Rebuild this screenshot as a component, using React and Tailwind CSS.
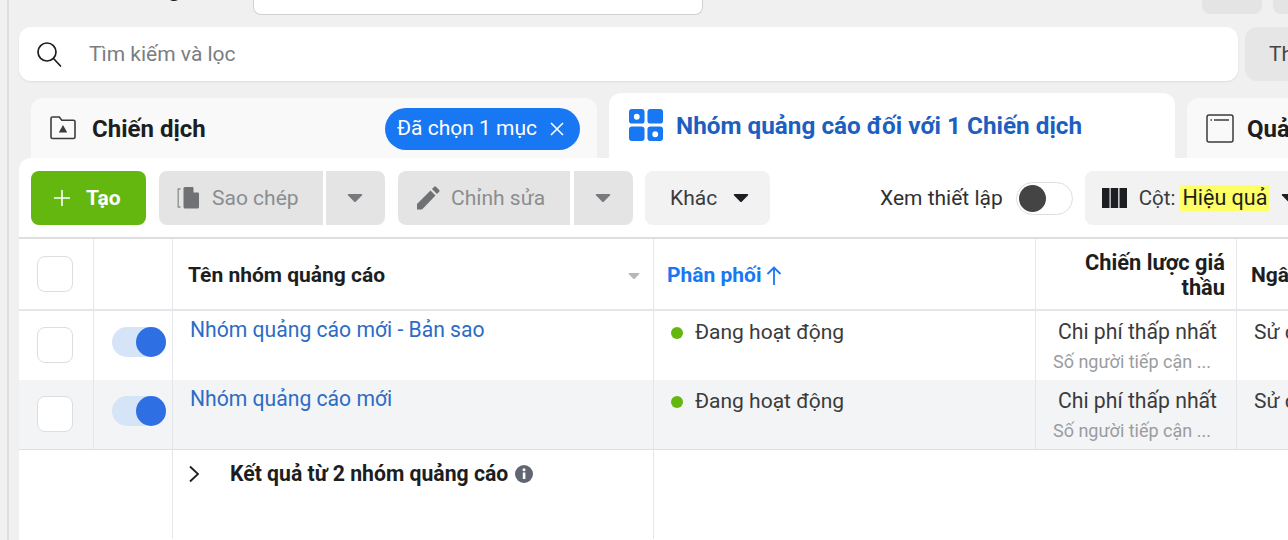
import React from 'react';

const font = { fontFamily: 'Roboto, sans-serif' };

function Caret({ className }) {
  return (
    <svg width="16" height="10" viewBox="0 0 16 10" className={className}>
      <path d="M1.5 1h13a.8.8 0 0 1 .6 1.3L9 8.6a1.4 1.4 0 0 1-2 0L.9 2.3A.8.8 0 0 1 1.5 1z" fill="currentColor" />
    </svg>
  );
}

function Toggle() {
  return (
    <div className="relative w-[54px] h-[30px] rounded-full bg-[#d6e4f7]">
      <div className="absolute right-0 top-0 w-[30px] h-[30px] rounded-full bg-[#2f6fe4]" />
    </div>
  );
}

function Checkbox() {
  return <div className="w-[36px] h-[36px] rounded-lg border border-[#dcdee1] bg-white" />;
}

function Row({ name, shaded }) {
  const bg = shaded ? 'bg-[#f3f4f6]' : 'bg-white';
  return (
    <>
      <div className={`${bg} h-[69px] border-r border-[#e4e6e9] flex justify-center pr-[2px] pt-[16px]`}>
        <Checkbox />
      </div>
      <div className={`${bg} h-[69px] border-r border-[#e4e6e9] flex justify-end pr-[6px] pt-[16px]`}>
        <Toggle />
      </div>
      <div className={`${bg} h-[69px] border-r border-[#e4e6e9] pl-[17px] pt-[5px] text-[21.15px] leading-[28px] text-[#2d6cc4] whitespace-nowrap`}>{name}</div>
      <div className={`${bg} h-[69px] border-r border-[#e4e6e9] pl-[17px] pt-[7px] flex items-start gap-[12px]`}>
        <span className="w-[12px] h-[12px] mt-[9px] rounded-full bg-[#63b70f]" />
        <span className="text-[21px] leading-[28px] text-[#3a3b3d]">Đang hoạt động</span>
      </div>
      <div className={`${bg} h-[69px] border-r border-[#e4e6e9] pt-[7px] pl-[17px]`}>
        <div className="text-[21.2px] leading-[28px] text-[#3a3b3d] text-center pr-[14px] whitespace-nowrap">Chi phí thấp nhất</div>
        <div className="text-[18px] leading-[22px] mt-[5px] text-[#9a9c9f] whitespace-nowrap">Số người tiếp cận ...</div>
      </div>
      <div className={`${bg} h-[69px] pl-[17px] pt-[7px] text-[21px] leading-[28px] text-[#3a3b3d] whitespace-nowrap`}>Sử dụng</div>
    </>
  );
}

export default function App() {
  return (
    <div style={font} className="w-[1288px] h-[540px] overflow-hidden bg-[#f0f0f0] flex">
      <div className="w-[7px] shrink-0 border-r-2 border-[#dfdfdf] box-content" />

      <div className="w-[1400px] shrink-0 pl-[10px]">
        {/* top bar, cut off by the window */}
        <div className="h-[15px] flex overflow-hidden">
          <div className="w-[234px] text-[26px] font-bold text-[#1c1e21] pl-[87px] leading-[24px] -mt-[25px] whitespace-nowrap">Quảng cáo</div>
          <div className="w-[450px] h-[15px] bg-white rounded-b-lg border border-t-0 border-[#cfd1d4]" />
          <div className="w-[60px] h-[14px] ml-[499px] bg-[#e4e4e4] rounded-b-lg" />
          <div className="w-[60px] h-[14px] ml-[11px] bg-[#e4e4e4] rounded-b-lg" />
        </div>

        {/* search */}
        <div className="flex gap-[7px] mt-[12px]">
          <div className="w-[1219px] shrink-0 h-[54px] bg-white rounded-xl flex items-center pl-[17px] shadow-[0_1px_2px_rgba(0,0,0,0.08)]">
            <svg width="26" height="26" viewBox="0 0 26 26" fill="none" stroke="#1c1e21" strokeWidth="1.7">
              <circle cx="11" cy="11" r="9" />
              <path d="M17.5 17.5 24.5 25" strokeLinecap="round" />
            </svg>
            <span className="ml-[27px] mt-[2px] text-[21px] text-[#7b7d80]">Tìm kiếm và lọc</span>
          </div>
          <div className="w-[100px] shrink-0 h-[54px] bg-[#e6e6e6] rounded-xl pl-[24px] text-[21px] leading-[54px] text-[#444]">Thêm</div>
        </div>

        {/* tabs */}
        <div className="flex items-end h-[77px] pl-[12px] gap-[12px]">
          <div className="w-[566px] shrink-0 h-[60px] bg-[#f9f9f9] rounded-t-xl flex pl-[18px] pr-[17px] pt-[10px] items-start">
            <svg width="28" height="28" viewBox="0 0 28 28" fill="none" stroke="#3a3b3d" strokeWidth="1.6" className="mt-[5px]">
              <path d="M2 24V5.5A1.5 1.5 0 0 1 3.500 4h6.800l2.500 3.200H24.500A1.500 1.500 0 0 1 26 8.700V24a1.500 1.500 0 0 1-1.500 1.500h-21A1.500 1.500 0 0 1 2 24z" />
              <path d="M14 12l4.200 7.500H9.800z" fill="#3a3b3d" stroke="none" />
            </svg>
            <span className="ml-[15px] text-[24px] leading-[42px] font-bold text-[#1c1e21]">Chiến dịch</span>
            <div className="ml-auto h-[42px] w-[195px] rounded-full bg-[#1877f2] text-white flex items-center pl-[12px] gap-[12px] text-[21px] whitespace-nowrap">
              Đã chọn 1 mục
              <svg width="16" height="16" viewBox="0 0 16 16" stroke="#fff" strokeWidth="1.600"><path d="M2 2l12 12M14 2 2 14" /></svg>
            </div>
          </div>

          <div className="w-[566px] shrink-0 h-[65px] bg-white rounded-t-xl flex pl-[20px] pt-[15px] items-start">
            <svg width="34" height="34" viewBox="0 0 35 35" fill="#1877f2" fillRule="evenodd">
              <path d="M3 1h10a3 3 0 0 1 3 3v9a3 3 0 0 1-3 3H3a3 3 0 0 1-3-3V4a3 3 0 0 1 3-3zm5 5a3 3 0 1 0 0 6 3 3 0 0 0 0-6z" />
              <rect x="19" y="1" width="16" height="15" rx="3" />
              <rect x="0" y="19" width="16" height="15" rx="3" />
              <path d="M22 19h10a3 3 0 0 1 3 3v9a3 3 0 0 1-3 3H22a3 3 0 0 1-3-3v-9a3 3 0 0 1 3-3zm5 5a3 3 0 1 0 0 6 3 3 0 0 0 0-6z" />
            </svg>
            <span className="ml-[13px] mt-[1px] text-[24.3px] leading-[34px] font-bold text-[#1d5fc0] whitespace-nowrap">Nhóm quảng cáo đối với 1 Chiến dịch</span>
          </div>

          <div className="w-[300px] shrink-0 h-[60px] bg-[#f9f9f9] rounded-t-xl flex pl-[19px] pt-[10px] items-start">
            <svg width="28" height="30" viewBox="0 0 28 30" fill="none" stroke="#3a3b3d" strokeWidth="1.500" className="mt-[6px]">
              <rect x="1" y="1" width="26" height="27" rx="2" />
              <path d="M4.500 6h1.500M8 6h15" />
            </svg>
            <span className="ml-[13px] text-[24px] leading-[42px] font-bold text-[#1c1e21]">Quảng cáo</span>
          </div>
        </div>

        {/* panel */}
        <div className="bg-white rounded-tl-xl h-[382px]">
          <div className="h-[81px] border-b-2 border-[#dedede] flex items-start pt-[13px] pl-[12px]">
            <div className="w-[115px] shrink-0 h-[54px] rounded-lg bg-[#63b70f] text-white flex items-center pl-[22px] gap-[15px]">
              <svg width="18" height="18" viewBox="0 0 18 18" stroke="#fff" strokeWidth="1.600"><path d="M9 1v16M1 9h16" /></svg>
              <span className="mt-[2px] text-[21px] font-bold">Tạo</span>
            </div>

            <div className="ml-[13px] w-[164px] shrink-0 h-[54px] rounded-l-lg bg-[#e4e4e4] flex items-center pl-[17px] text-[#8b8d90]">
              <svg width="26" height="26" viewBox="0 0 26 26">
                <path d="M4.500 4H2.200v18h2.300" fill="none" stroke="#8b8d90" strokeWidth="1.300" />
                <path d="M9 2h8l6 6v14a1.500 1.500 0 0 1-1.500 1.500H9A1.500 1.500 0 0 1 7.500 22V3.500A1.500 1.500 0 0 1 9 2z" fill="#6f7174" />
                <path d="M17.500 1.500v6h6z" fill="#e4e4e4" />
              </svg>
              <span className="ml-[10px] mt-[2px] text-[21px] whitespace-nowrap">Sao chép</span>
            </div>
            <div className="ml-[3px] w-[59px] shrink-0 h-[54px] rounded-r-lg bg-[#e4e4e4] flex items-center justify-center pr-[2px] text-[#77797c]">
              <Caret />
            </div>

            <div className="ml-[13px] w-[172px] shrink-0 h-[54px] rounded-l-lg bg-[#e4e4e4] flex items-center pl-[17px] text-[#8b8d90]">
              <svg width="26" height="26" viewBox="0 0 26 26" fill="#6f7174">
                <path d="M2 24.500V19L15.500 5.500l5 5L7 24.500z" />
                <path d="M17 4l2.200-2.200a1.200 1.200 0 0 1 1.700 0l3.300 3.300a1.200 1.200 0 0 1 0 1.700L22 9z" />
              </svg>
              <span className="ml-[10px] mt-[2px] text-[21px] whitespace-nowrap">Chỉnh sửa</span>
            </div>
            <div className="ml-[4px] w-[59px] shrink-0 h-[54px] rounded-r-lg bg-[#e4e4e4] flex items-center justify-center pr-[2px] text-[#77797c]">
              <Caret />
            </div>

            <div className="ml-[12px] w-[125px] shrink-0 h-[54px] rounded-lg bg-[#f2f2f2] flex items-center pl-[25px] gap-[16px] text-[#3a3b3d]">
              <span className="mt-[2px] text-[21px]">Khác</span>
              <Caret className="text-[#1c1e21]" />
            </div>

            <span className="ml-[110px] text-[21px] leading-[54px] text-[#2f3033] whitespace-nowrap">Xem thiết lập</span>
            <div className="ml-[13px] mt-[11px] w-[57px] shrink-0 h-[33px] rounded-full bg-white border border-[#dcdee1] pl-[2px] pt-[2px]">
              <div className="w-[27px] h-[27px] rounded-full bg-[#444]" />
            </div>

            <div className="ml-[12px] w-[300px] shrink-0 h-[54px] rounded-lg bg-[#f2f2f2] flex items-center pl-[17px] text-[#3a3b3d]">
              <svg width="25" height="22" viewBox="0 0 25 22" fill="#1c1e21">
                <rect x="0" y="1" width="7.500" height="20" />
                <rect x="8.700" y="1" width="7.500" height="20" />
                <rect x="17.500" y="1" width="7.500" height="20" />
              </svg>
              <span className="ml-[12px] text-[20.5px] whitespace-nowrap">Cột:</span>
              <span className="ml-[5px] px-[2px] text-[21.500px] leading-[26px] bg-[#ffff66] text-[#1c1e21] whitespace-nowrap">Hiệu quả</span>
              <Caret className="ml-[12px] text-[#1c1e21]" />
            </div>
          </div>

          {/* table */}
          <div className="grid grid-cols-[75px_79px_481px_382px_201px_1fr]">
            <div className="h-[72px] border-r border-b-2 border-[#e4e6e9] flex items-center justify-center pr-[2px]">
              <Checkbox />
            </div>
            <div className="h-[72px] border-r border-b-2 border-[#e4e6e9]" />
            <div className="h-[72px] border-r border-b-2 border-[#e4e6e9] pl-[15px] pr-[13px] pt-[3px] flex items-center justify-between">
              <span className="text-[21px] font-bold text-[#1c1e21] whitespace-nowrap">Tên nhóm quảng cáo</span>
              <Caret className="w-[12px] h-[8px] text-[#b5b7ba]" />
            </div>
            <div className="h-[72px] border-r border-b-2 border-[#e4e6e9] pl-[13px] pt-[3px] flex items-center text-[21px] font-bold text-[#1877f2] whitespace-nowrap">
              Phân phối
              <svg width="16" height="20" viewBox="0 0 16 20" fill="none" stroke="#1877f2" strokeWidth="1.800" className="ml-[4px]">
                <path d="M8 19V2M1.500 8 8 1.500 14.500 8" />
              </svg>
            </div>
            <div className="h-[72px] border-r border-b-2 border-[#e4e6e9] pr-[11px] pt-[11px] text-right text-[21.800px] leading-[25px] font-bold text-[#1c1e21] whitespace-nowrap">
              Chiến lược giá<br />thầu
            </div>
            <div className="h-[72px] border-b-2 border-[#e4e6e9] pl-[14px] pt-[3px] flex items-center text-[21px] font-bold text-[#1c1e21] whitespace-nowrap">Ngân sách</div>

            <Row name="Nhóm quảng cáo mới - Bản sao" />
            <Row name="Nhóm quảng cáo mới" shaded />

            <div className="col-span-6 grid grid-cols-[154px_481px_1fr] border-t border-[#dedfe1] h-[90px]">
              <div className="border-r border-[#e4e6e9]" />
              <div className="border-r border-[#e4e6e9] pl-[15px] pt-[10px] flex items-start">
                <svg width="12" height="18" viewBox="0 0 12 18" fill="none" stroke="#1c1e21" strokeWidth="1.800" className="mt-[5px]">
                  <path d="M2 1.500 10 9l-8 7.500" />
                </svg>
                <span className="ml-[30px] text-[21.2px] leading-[28px] font-bold text-[#1c1e21] whitespace-nowrap">Kết quả từ 2 nhóm quảng cáo</span>
                <svg width="18" height="18" viewBox="0 0 18 18" className="ml-[7px] mt-[5px]">
                  <circle cx="9" cy="9" r="9" fill="#606770" />
                  <rect x="7.800" y="7.500" width="2.600" height="6.500" fill="#fff" />
                  <circle cx="9" cy="4.800" r="1.500" fill="#fff" />
                </svg>
              </div>
              <div />
            </div>
          </div>
        </div>
      </div>
    </div>
  );
}
